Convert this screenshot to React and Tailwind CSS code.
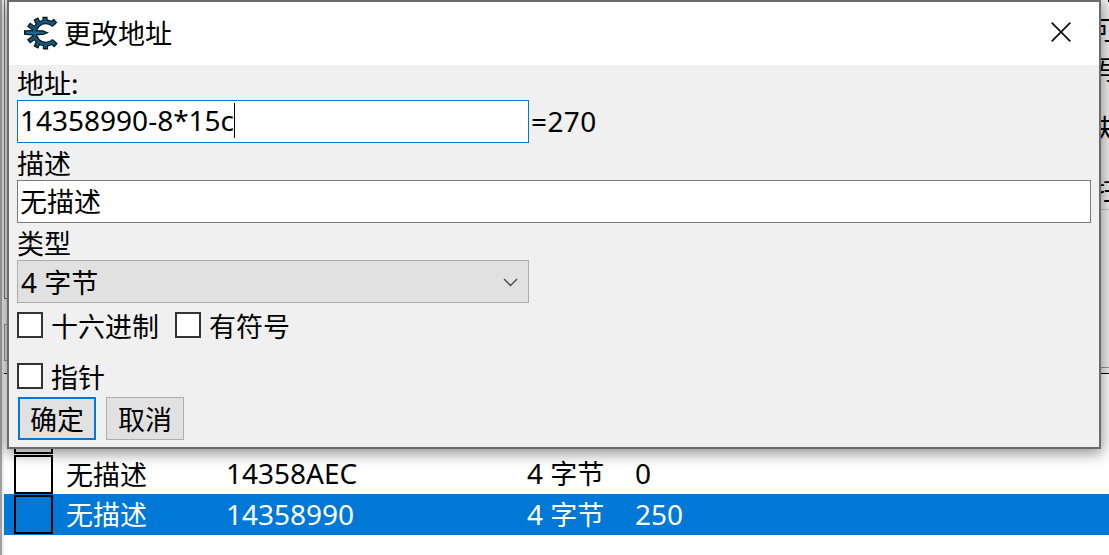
import React from "react";

const num = "font-['Noto_Sans'] text-[28px]";

function GearIcon() {
  return (
    <svg width="34" height="34" viewBox="0 0 34 34" fill="none" className="shrink-0">
      <path d="M27.500 8.300 L31.500 4.500 M21 6.500 V0.800 M14.500 8 L11.800 2.500 M10 12.500 L4.500 8.500 M10 21.500 L4.500 25.500 M14.500 26 L11.800 31.500 M21.500 28 V33.500 M27.500 25.500 L32 29.500" stroke="#061620" strokeWidth="5.200" />
      <path d="M30 9.500 A11.200 11.200 0 1 0 30 24.500" stroke="#061620" strokeWidth="4.800" />
      <path d="M0 14.200 L8 14 L19 14.300 L25 16.700 L19 19 L8 19.500 L0 18.800 Z" fill="#061620" />
      <path d="M27.500 8.300 L30.800 5.200 M21 6.500 V2 M14.500 8 L12.400 3.700 M10 12.500 L5.500 9.200 M10 21.500 L5.500 24.700 M14.500 26 L12.400 30.300 M21.500 28 V32.300 M27.500 25.500 L31 28.600" stroke="#145678" strokeWidth="2.800" />
      <path d="M29.300 9 A11.200 11.200 0 1 0 29.300 25" stroke="#145678" strokeWidth="2.600" />
      <path d="M1.500 15.500 L8 15.200 L18 15.600 L22 16.700 L18 17.700 L8 18.200 L1.500 17.600 Z" fill="#1b6a91" />
    </svg>
  );
}

function ListCheck() {
  return <div className="h-[39px] w-[39px] shrink-0 border-2 border-black" />;
}

function Row({ code, value, selected }) {
  return (
    <div className={`flex shrink-0 items-center pl-[10px] ${selected ? "h-[41px] bg-[#0078d7] text-white" : "h-[40px] bg-white"}`}>
      <ListCheck />
      <div className="-mt-px w-[162px] shrink-0 pl-[13px]">无描述</div>
      <div className={`-mt-[2px] w-[300px] shrink-0 pl-[11px] pr-0 ${num}`}>{code}</div>
      <div className="-mt-[2px] w-[109px] shrink-0 pl-[12px] whitespace-nowrap"><span className={num}>4 </span>字节</div>
      <div className={`-mt-[2px] pl-[11px] ${num}`}>{value}</div>
    </div>
  );
}

function Check({ label }) {
  return (
    <label className="flex items-center gap-2">
      <span className="h-[26px] w-[26px] border-2 border-[#333] bg-white" />
      <span className="relative top-px">{label}</span>
    </label>
  );
}

export default function App() {
  return (
    <div className="relative flex h-[555px] w-[1109px] flex-col overflow-hidden bg-[#f0f0f0] font-['Noto_Sans_CJK_SC',sans-serif] text-[27px] leading-[40px] text-black">
      <div className="flex h-full border-l-2 border-[#a0a0a0]">
        <div className="w-[2px] shrink-0 bg-[#ededed]" />
        <div className="flex min-w-0 grow flex-col">
          <div className="flex h-[373px] shrink-0 justify-between">
            <div className="flex w-[10px] flex-col">
              <div className="h-[299px] border-b border-l border-[#777] bg-[#f0f0f0]" />
              <div className="mt-[25px] h-[37px] border border-[#999] bg-[#e1e1e1]" />
            </div>
            <div className="flex w-[44px] flex-col overflow-hidden whitespace-nowrap">
              <div className="h-[2px] border-x border-black" />
              <div className="mt-[7px] h-[42px] pl-[25px]">可</div>
              <div className="-mt-[2px] h-[42px] pl-[29px]">写</div>
              <div className="mt-[17px] h-[42px] pl-[23px]">快</div>
              <div className="mt-[21px] h-[39px] border-b border-[#c8c8c8] pl-[28px]">扫</div>
              <div className="mt-[157px] h-px bg-[#999]" />
            </div>
          </div>
          <div className="flex h-[81px] shrink-0 flex-col justify-end border-t border-black bg-white pl-[10px]">
            <ListCheck />
          </div>
          <Row code="14358AEC" value="0" />
          <Row code="14358990" value="250" selected />
          <div className="grow bg-white" />
        </div>
      </div>

      <div className="absolute left-[7px] top-0 flex h-[449px] w-[1094px] flex-col border-2 border-[#6b6b6b] bg-[#f0f0f0] shadow-[0_3px_14px_1px_rgba(0,0,0,0.45)]">
        <div className="flex h-[63px] shrink-0 items-center bg-white pl-[15px] pr-[28px]">
          <div className="-mt-[2px]"><GearIcon /></div>
          <span className="-mt-px grow pl-[6px]">更改地址</span>
          <svg width="20" height="20" viewBox="0 0 20 20" className="-mt-[3px] shrink-0" stroke="#111" strokeWidth="1.8">
            <path d="M.7.7 19.300 19.300M19.300.7.7 19.300" />
          </svg>
        </div>
        <div className="flex flex-col px-[8px]">
          <div className="flex h-[35px] items-center">地址:</div>
          <div className="flex h-[43px] items-center">
            <div className="flex h-[43px] w-[512px] items-center border border-[#0078d7] bg-white pl-[2px]">
              <span className={`-mt-[4px] ${num}`}>14358990-8*15c</span>
              <span className="-mt-[3px] h-[35px] w-px bg-black" />
            </div>
            <span className={`-mt-[2px] pl-[2px] tracking-[0.4px] ${num}`}>=270</span>
          </div>
          <div className="flex h-[37px] items-center pt-[3px]">描述</div>
          <div className="flex h-[43px] items-center border border-[#7a7a7a] bg-white pb-[2px] pl-[2px]">无描述</div>
          <div className="flex h-[37px] items-center pt-[3px]">类型</div>
          <div className="flex h-[43px] w-[512px] items-center justify-between border border-[#adadad] bg-[#e1e1e1] pl-[3px] pr-[10px]">
            <span><span className={num}>4 </span>字节</span>
            <svg width="15" height="9" viewBox="0 0 15 9" fill="none" stroke="#444" strokeWidth="1.300" className="mt-[2px]">
              <path d="M1 1 7.500 7.500 14 1" />
            </svg>
          </div>
          <div className="mt-[2px] flex h-[40px] items-center gap-4">
            <Check label="十六进制" />
            <Check label="有符号" />
          </div>
          <div className="mt-[11px] flex h-[40px] items-center">
            <Check label="指针" />
          </div>
          <div className="mt-px flex gap-[10px] pl-px">
            <button className="h-[43px] w-[78px] border-2 border-[#0078d7] bg-[#e1e1e1]">确定</button>
            <button className="h-[43px] w-[78px] border border-[#adadad] bg-[#e1e1e1]">取消</button>
          </div>
        </div>
      </div>
    </div>
  );
}
